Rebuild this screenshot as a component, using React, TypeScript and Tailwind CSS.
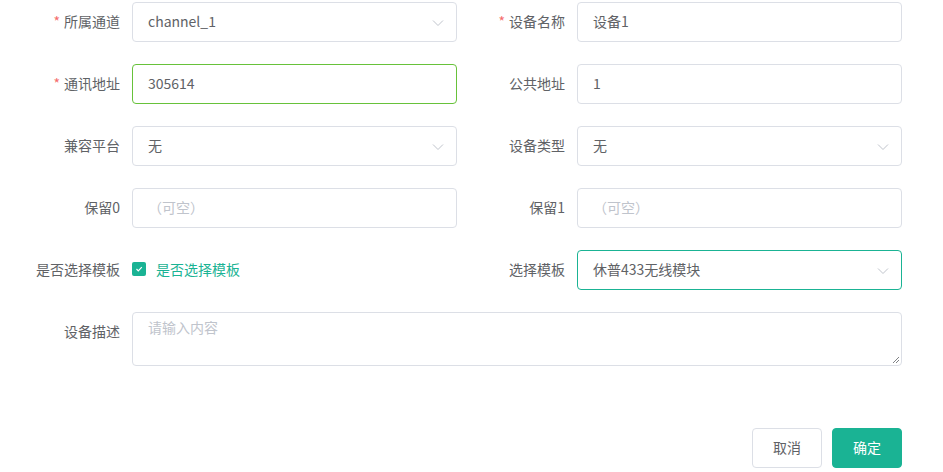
import React from 'react'

const font = { fontFamily: '"Noto Sans CJK SC", "Noto Sans", sans-serif' }

function Chevron() {
  return (
    <svg width="12" height="8" viewBox="0 0 12 8" className="absolute right-[12px] top-[16px]">
      <path d="M1 1.5 L6 6.5 L11 1.5" fill="none" stroke="#c0c4cc" strokeWidth="1" />
    </svg>
  )
}

function Label({ text, required, width }: { text: string; required?: boolean; width: string }) {
  return (
    <div className={`${width} shrink-0 pr-[12px] text-right text-[14px] leading-[38px] text-[#606266]`}>
      {required && <span className="mr-[4px] text-[#f56c6c]">*</span>}
      {text}
    </div>
  )
}

function Field({
  value,
  placeholder,
  select,
  border = 'border-[#dcdfe6]',
}: {
  value?: string
  placeholder?: string
  select?: boolean
  border?: string
}) {
  return (
    <div className={`relative h-[40px] w-[325px] rounded-[4px] border bg-white ${border}`}>
      <div className={`pl-[15px] text-[14px] leading-[36px] ${value ? 'text-[#606266]' : 'text-[#c0c4cc]'}`}>
        {value ?? placeholder}
      </div>
      {select && <Chevron />}
    </div>
  )
}

export default function App() {
  return (
    <div className="h-[472px] w-[943px] bg-white pt-[2px]" style={font}>
      <div className="flex flex-col gap-[22px]">
        <div className="flex">
          <Label text="所属通道" required width="w-[132px]" />
          <Field value="channel_1" select />
          <Label text="设备名称" required width="w-[120px]" />
          <Field value="设备1" />
        </div>
        <div className="flex">
          <Label text="通讯地址" required width="w-[132px]" />
          <Field value="305614" border="border-[#67c23a]" />
          <Label text="公共地址" width="w-[120px]" />
          <Field value="1" />
        </div>
        <div className="flex">
          <Label text="兼容平台" width="w-[132px]" />
          <Field value="无" select />
          <Label text="设备类型" width="w-[120px]" />
          <Field value="无" select />
        </div>
        <div className="flex">
          <Label text="保留0" width="w-[132px]" />
          <Field placeholder="（可空）" />
          <Label text="保留1" width="w-[120px]" />
          <Field placeholder="（可空）" />
        </div>
        <div className="flex">
          <Label text="是否选择模板" width="w-[132px]" />
          <div className="flex w-[325px] items-center pb-[2px]">
            <span className="flex h-[14px] w-[14px] items-center justify-center rounded-[2px] bg-[#1ab394]">
              <svg width="10" height="10" viewBox="0 0 10 10">
                <path d="M2.5 5 L4.3 6.8 L7.8 3.2" fill="none" stroke="white" strokeWidth="1.2" />
              </svg>
            </span>
            <span className="ml-[10px] text-[14px] text-[#1ab394]">是否选择模板</span>
          </div>
          <Label text="选择模板" width="w-[120px]" />
          <Field value="休普433无线模块" select border="border-[#1ab394]" />
        </div>
        <div className="flex">
          <Label text="设备描述" width="w-[132px]" />
          <div className="relative h-[54px] w-[770px] rounded-[4px] border border-[#dcdfe6]">
            <div className="px-[15px] pt-[4px] text-[14px] leading-[21px] text-[#c0c4cc]">请输入内容</div>
            <svg width="8" height="8" viewBox="0 0 8 8" className="absolute bottom-[1px] right-[1px]">
              <path d="M7 1 L1 7 M7 4 L4 7" stroke="#606266" strokeWidth="0.8" />
            </svg>
          </div>
        </div>
      </div>
      <div className="mt-[62px] flex justify-end gap-[10px] pr-[41px]">
        <button className="h-[40px] w-[70px] rounded-[4px] border border-[#dcdfe6] bg-white pb-[2px] text-[14px] text-[#606266]">
          取消
        </button>
        <button className="h-[40px] w-[70px] rounded-[4px] border border-[#1ab394] bg-[#1ab394] pb-[2px] text-[14px] text-white">
          确定
        </button>
      </div>
    </div>
  )
}
